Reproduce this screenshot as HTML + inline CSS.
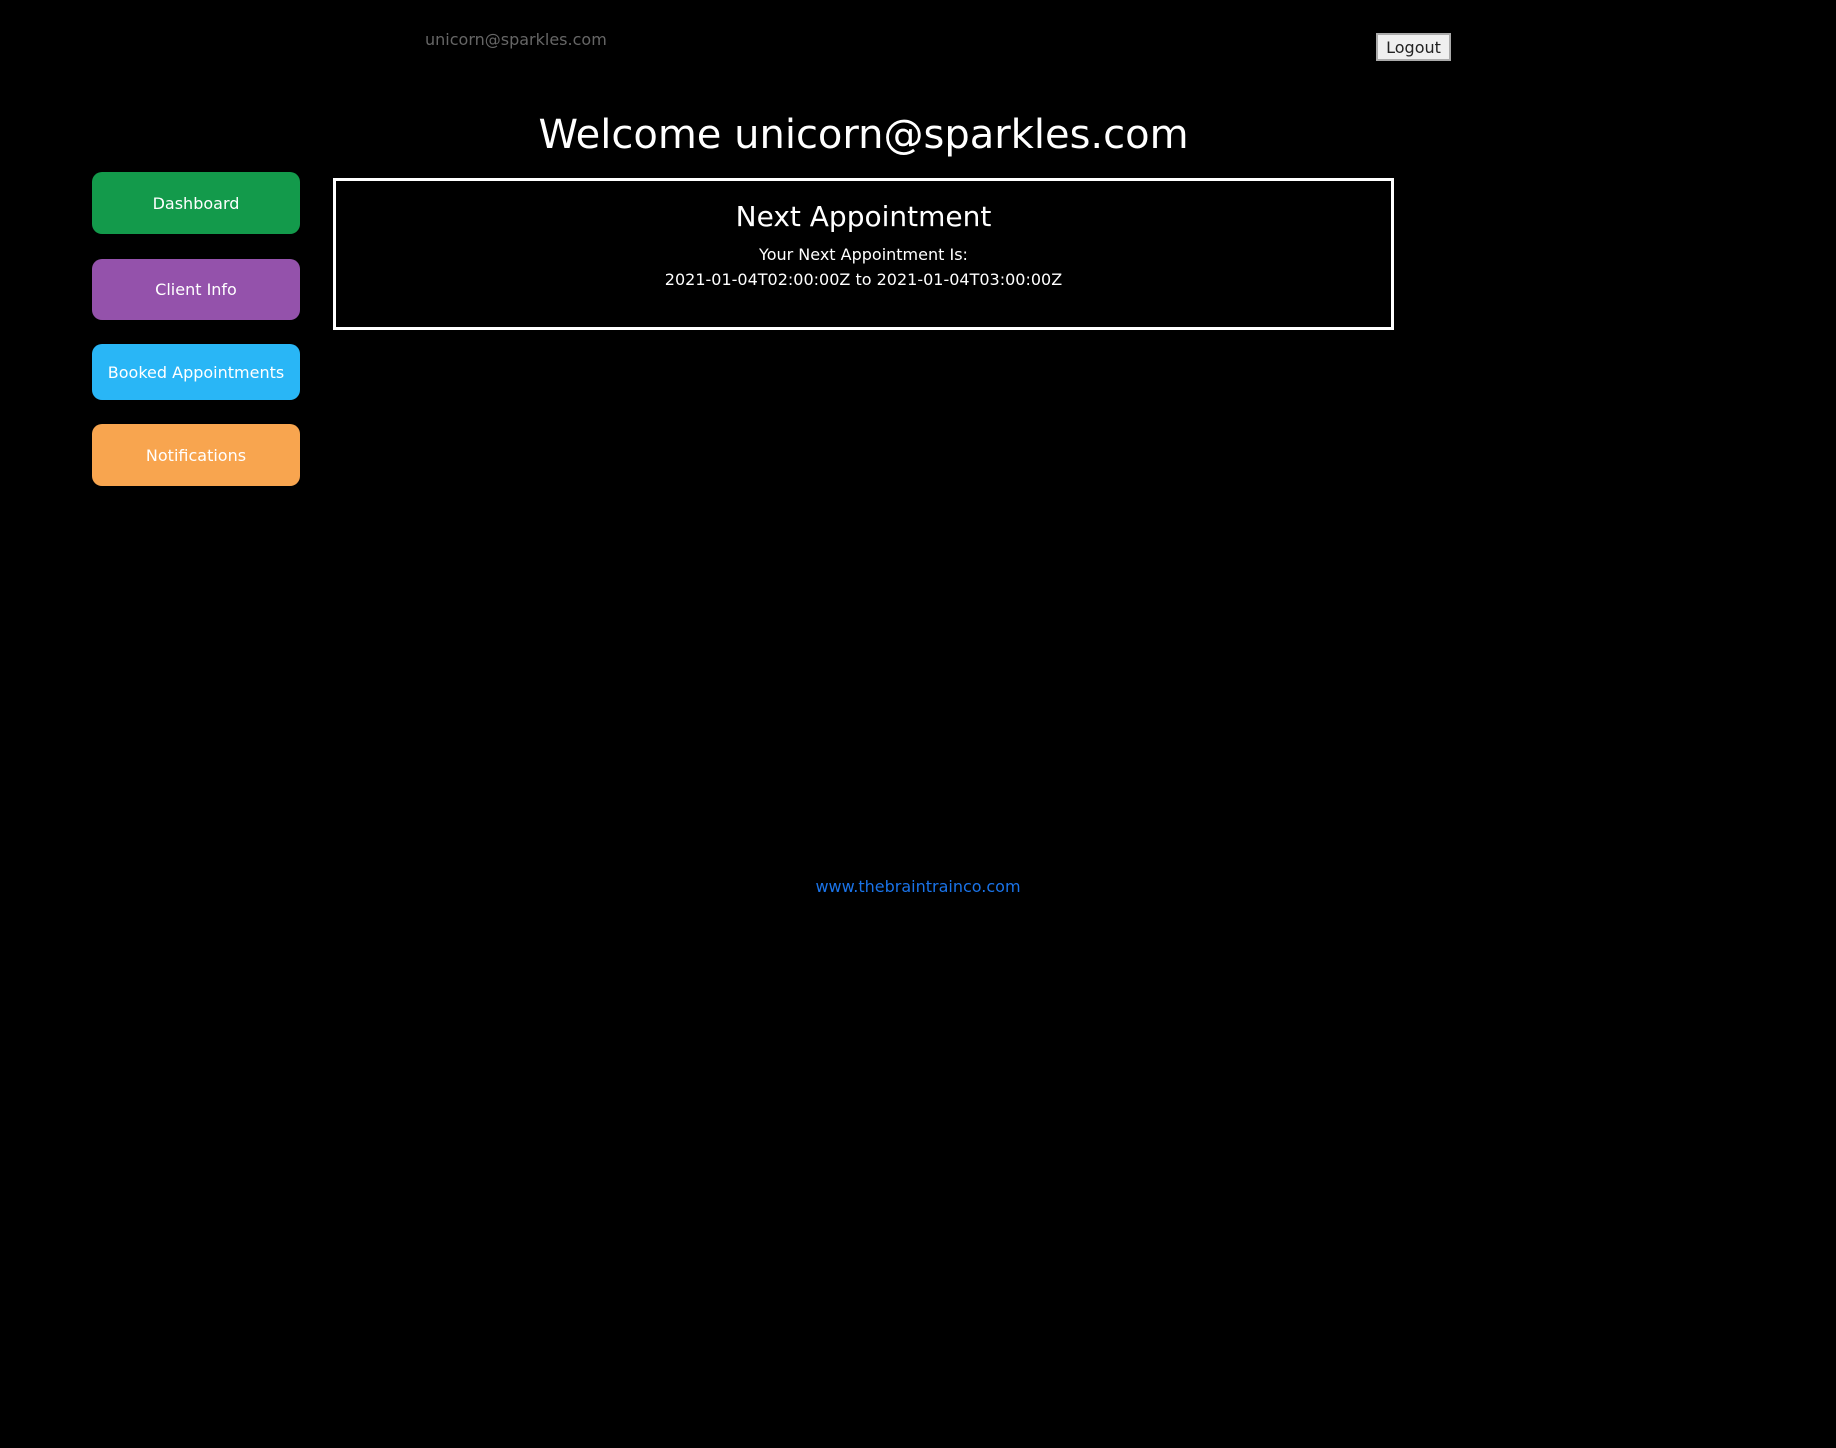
<!DOCTYPE html>
<html><head><meta charset="utf-8"><style>
html,body{margin:0;padding:0;background:#000;width:1836px;height:1448px;overflow:hidden;font-family:"DejaVu Sans","Liberation Sans",sans-serif;color:#fff;position:relative}
.a{position:absolute}
.email{left:425px;top:30px;font-size:16px;color:#666}
.logout{left:1376px;top:33px;width:75px;height:28px;background:#efefef;border:2px solid #aaa;box-sizing:border-box;color:#222;font-size:16px;text-align:center;line-height:25px}
.welcome{left:333px;width:1061px;top:109px;text-align:center;font-size:40px;line-height:52px}
.btn{left:92px;width:208px;border-radius:10px;color:#fff;font-size:16px;display:flex;align-items:center;justify-content:center}
.box{left:333px;top:178px;width:1061px;height:152px;border:3px solid #fff;box-sizing:border-box;text-align:center}
.link{left:0;width:1836px;top:877px;text-align:center;color:#1a73e8;font-size:16px}
</style></head><body>
<div class="a email">unicorn@sparkles.com</div>
<div class="a logout">Logout</div>
<div class="a welcome">Welcome unicorn@sparkles.com</div>
<div class="a btn" style="top:172px;height:62px;background:#139a4b">Dashboard</div>
<div class="a btn" style="top:259px;height:61px;background:#9452ab">Client Info</div>
<div class="a btn" style="top:344px;height:56px;background:#29b6f6">Booked Appointments</div>
<div class="a btn" style="top:424px;height:62px;background:#f8a54f">Notifications</div>
<div class="a box">
<div style="font-size:28px;margin-top:19px;line-height:34px">Next Appointment</div>
<div style="font-size:16px;margin-top:9px;line-height:24px">Your Next Appointment Is:</div>
<div style="font-size:16px;line-height:25px">2021-01-04T02:00:00Z to 2021-01-04T03:00:00Z</div>
</div>
<div class="a link">www.thebraintrainco.com</div>
</body></html>
